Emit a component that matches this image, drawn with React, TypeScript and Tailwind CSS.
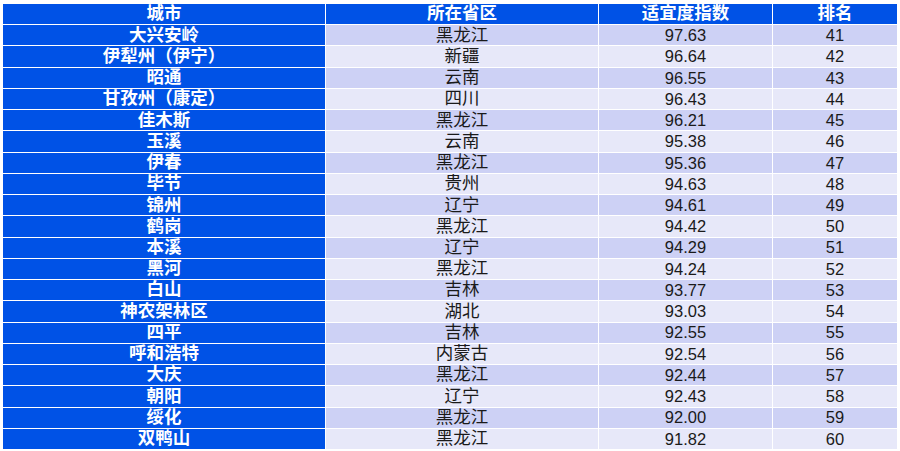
const rows: [string, string, string, number][] = [
  ['大兴安岭', '黑龙江', '97.63', 41],
  ['伊犁州（伊宁）', '新疆', '96.64', 42],
  ['昭通', '云南', '96.55', 43],
  ['甘孜州（康定）', '四川', '96.43', 44],
  ['佳木斯', '黑龙江', '96.21', 45],
  ['玉溪', '云南', '95.38', 46],
  ['伊春', '黑龙江', '95.36', 47],
  ['毕节', '贵州', '94.63', 48],
  ['锦州', '辽宁', '94.61', 49],
  ['鹤岗', '黑龙江', '94.42', 50],
  ['本溪', '辽宁', '94.29', 51],
  ['黑河', '黑龙江', '94.24', 52],
  ['白山', '吉林', '93.77', 53],
  ['神农架林区', '湖北', '93.03', 54],
  ['四平', '吉林', '92.55', 55],
  ['呼和浩特', '内蒙古', '92.54', 56],
  ['大庆', '黑龙江', '92.44', 57],
  ['朝阳', '辽宁', '92.43', 58],
  ['绥化', '黑龙江', '92.00', 59],
  ['双鸭山', '黑龙江', '91.82', 60],
]

const headers = ['城市', '所在省区', '适宜度指数', '排名']

export default function App() {
  return (
    <div
      className="h-[451px] w-[900px] bg-white pl-[3px] pr-[3px] pt-[4px]"
      style={{ fontFamily: '"Liberation Sans", "Noto Sans CJK SC", sans-serif' }}
    >
      <div className="grid h-[445px] grid-cols-[322px_272px_173px_124px] grid-rows-[repeat(21,minmax(0,1fr))] gap-px leading-none">
        {headers.map(h => (
          <div key={h} className="flex items-center justify-center bg-[#0052e6] text-[17.5px] font-bold text-white">
            {h}
          </div>
        ))}
        {rows.map(([city, prov, score, rank], i) => {
          const bg = i % 2 === 0 ? 'bg-[#cdd1f5]' : 'bg-[#e7e8f9]'
          return [
            <div key={city} className="flex items-center justify-center bg-[#0052e6] text-[17.5px] font-bold text-white">
              {city}
            </div>,
            <div key={city + 'p'} className={`flex items-center justify-center text-[17.5px] text-[#1a1a1a] ${bg}`}>
              {prov}
            </div>,
            <div key={city + 's'} className={`flex items-center justify-center text-[16.5px] text-[#1a1a1a] ${bg}`}>
              {score}
            </div>,
            <div key={city + 'r'} className={`flex items-center justify-center text-[16.5px] text-[#1a1a1a] ${bg}`}>
              {rank}
            </div>,
          ]
        })}
      </div>
    </div>
  )
}
